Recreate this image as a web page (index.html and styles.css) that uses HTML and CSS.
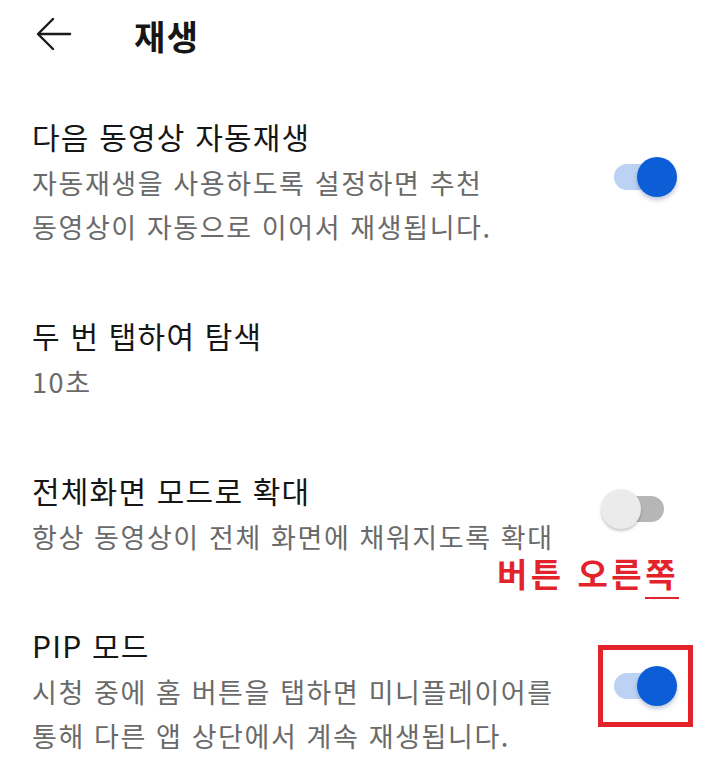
FILE: index.html
```html
<!DOCTYPE html>
<html lang="ko">
<head>
  <meta charset="UTF-8">
  <meta name="viewport" content="width=device-width, initial-scale=1.0">
  <title>재생</title>
  <link rel="stylesheet" href="styles.css">
</head>
<body>
  <header class="topbar">
    <button class="back" aria-label="뒤로">
      <svg width="36" height="36" viewBox="0 0 36 36" fill="none" stroke="#1a1a1a" stroke-width="2.4" stroke-linecap="round" stroke-linejoin="round">
        <path d="M34 16H3"/>
        <path d="M17 1L2 16l15 15"/>
      </svg>
    </button>
    <h1>재생</h1>
  </header>

  <ul class="settings">
    <li class="item">
      <div class="text">
        <div class="title">다음 동영상 자동재생</div>
        <div class="desc">자동재생을 사용하도록 설정하면 추천<br>동영상이 자동으로 이어서 재생됩니다.</div>
      </div>
      <span class="toggle on"><span class="track"></span><span class="thumb"></span></span>
    </li>
    <li class="item">
      <div class="text">
        <div class="title">두 번 탭하여 탐색</div>
        <div class="desc">10초</div>
      </div>
    </li>
    <li class="item">
      <div class="text">
        <div class="title">전체화면 모드로 확대</div>
        <div class="desc">항상 동영상이 전체 화면에 채워지도록 확대</div>
      </div>
      <span class="toggle"><span class="track"></span><span class="thumb"></span></span>
    </li>
    <li class="item pip">
      <div class="note">버튼 오른<u>쪽</u></div>
      <div class="text">
        <div class="title">PIP 모드</div>
        <div class="desc">시청 중에 홈 버튼을 탭하면 미니플레이어를<br>통해 다른 앱 상단에서 계속 재생됩니다.</div>
      </div>
      <span class="toggle on marked"><span class="track"></span><span class="thumb"></span></span>
    </li>
  </ul>
</body>
</html>
```

FILE: styles.css
```css
body {
  margin: 0;
  background: #fff;
  font-family: "Noto Sans CJK KR", "Noto Sans", sans-serif;
  color: #161616;
}
.topbar {
  height: 70px;
  display: flex;
  align-items: center;
  padding-left: 36px;
}
.back {
  width: 36px;
  height: 36px;
  padding: 0;
  border: none;
  background: none;
  margin-top: 2px;
}
.topbar h1 {
  margin: 0 0 0 62px;
  font-size: 34px;
  font-weight: 700;
  letter-spacing: 1.5px;
  line-height: 1;
  padding-top: 2px;
}
.settings {
  list-style: none;
  margin: 0;
  padding: 11px 0 0;
}
.item {
  position: relative;
  display: flex;
  align-items: center;
  justify-content: space-between;
  padding: 30px 43px 31px 32px;
}
.title {
  font-size: 30px;
  line-height: 50px;
  letter-spacing: 1.2px;
  white-space: nowrap;
}
.desc {
  font-size: 27px;
  line-height: 44px;
  letter-spacing: 1.6px;
  color: #6a6a6a;
  white-space: nowrap;
}

/* switch */
.toggle {
  position: relative;
  flex: none;
  width: 76px;
  height: 40px;
  margin-top: -6px;
}
.toggle .track {
  position: absolute;
  left: 13px;
  top: 7px;
  width: 50px;
  height: 26px;
  border-radius: 13px;
  background: #b6b6b6;
}
.toggle .thumb {
  position: absolute;
  left: 0;
  top: 0;
  width: 40px;
  height: 40px;
  border-radius: 50%;
  background: #ebebeb;
  box-shadow: 0 2px 3px rgba(0, 0, 0, 0.22);
}
.toggle.on .track {
  background: #bcd2f4;
}
.toggle.on .thumb {
  left: 36px;
  background: #0b5ed6;
  box-shadow: 0 3px 4px rgba(0, 40, 110, 0.25);
}

/* annotation */
.note {
  position: absolute;
  top: -37px;
  left: 497px;
  font-size: 33px;
  font-weight: 700;
  line-height: 40px;
  letter-spacing: 3.5px;
  color: #e3232c;
  white-space: nowrap;
}
.note u {
  text-decoration: none;
  border-bottom: 2px solid #e3232c;
}
.toggle.marked::after {
  content: "";
  position: absolute;
  left: -3px;
  top: -21px;
  width: 85px;
  height: 72px;
  border: 5px solid #e3232c;
}
```
